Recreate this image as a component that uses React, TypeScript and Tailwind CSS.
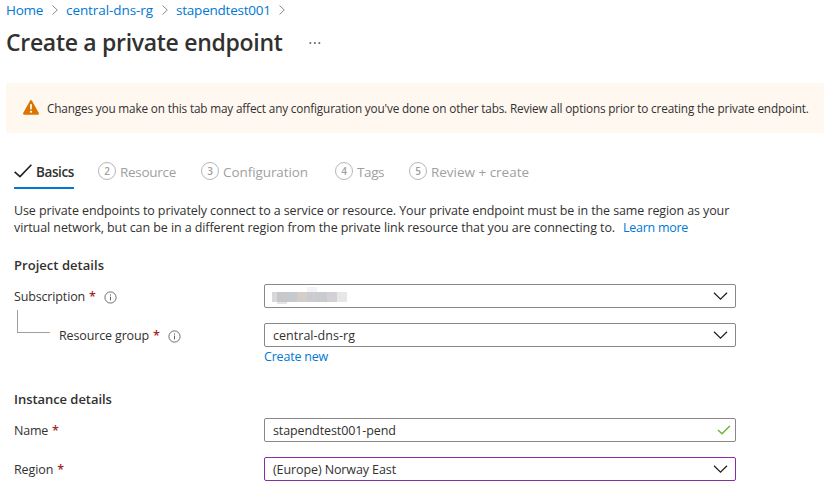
import type { ReactNode } from "react";

function CrumbChevron() {
  return (
    <svg width="6" height="10" viewBox="0 0 6 10" fill="none" stroke="#8a8886" strokeWidth="1">
      <path d="M0.5 0.5 5.3 5 0.5 9.5" />
    </svg>
  );
}

function ChevronDown() {
  return (
    <svg width="15" height="8" viewBox="0 0 15 8" fill="none" stroke="#201f1e" strokeWidth="1.25">
      <path d="M1 0.8 7.5 7.1 14 0.8" />
    </svg>
  );
}

function InfoIcon() {
  return (
    <svg width="13" height="13" viewBox="0 0 13 13" fill="none" stroke="#605e5c">
      <circle cx="6.5" cy="6.5" r="5.6" strokeWidth="0.9" />
      <path d="M6.5 5.6V9.4M6.5 3.5V4.6" strokeWidth="1" />
    </svg>
  );
}

function Required() {
  return <span className="ml-1 font-semibold text-[#a4262c]">*</span>;
}

function Step({ n, label, className }: { n: number; label: string; className: string }) {
  return (
    <div className="flex h-[22px] items-center gap-1 text-[13.5px] text-[#a19f9d]">
      <span className="mb-0.5 flex h-[18px] w-[18px] items-center justify-center rounded-full border border-[#b8b6b4] text-[10px] leading-none font-semibold">
        {n}
      </span>
      <span className={className}>{label}</span>
    </div>
  );
}

function Field({ children, icon, active = false }: { children: ReactNode; icon: ReactNode; active?: boolean }) {
  return (
    <div
      className={`flex h-6 w-[472px] items-center justify-between rounded-[2px] border pl-2 ${
        active ? "border-[#8a2da5]" : "border-[#8a8886]"
      }`}
    >
      <div className="pt-0.5">{children}</div>
      {icon}
    </div>
  );
}

const chevron = (
  <span className="mr-[7px]">
    <ChevronDown />
  </span>
);

export default function App() {
  return (
    <div className="h-[496px] w-[824px] overflow-hidden bg-white font-['Open_Sans','Noto_Sans',sans-serif] text-[12.5px] tracking-[-0.1px] whitespace-nowrap text-[#323130]">
      <nav className="flex h-5 items-center pl-1.5 text-[13.5px] text-[#0078d4]">
        <span className="w-[46px] tracking-[-0.25px]">Home</span>
        <CrumbChevron />
        <span className="ml-2 w-24 tracking-[-0.08px]">central-dns-rg</span>
        <CrumbChevron />
        <span className="ml-2 w-[103px] tracking-[-0.22px]">stapendtest001</span>
        <CrumbChevron />
      </nav>

      <header className="mt-1.5 flex h-8 items-center pl-1.5">
        <h1 className="w-[303px] text-[23px] leading-8 font-semibold tracking-[-0.3px]">Create a private endpoint</h1>
        <svg className="mt-0.5" width="12" height="2" viewBox="0 0 12 2" fill="#605e5c">
          <rect x="0.5" y="0.2" width="1.7" height="1.7" />
          <rect x="5" y="0.2" width="1.7" height="1.7" />
          <rect x="9.5" y="0.2" width="1.7" height="1.7" />
        </svg>
      </header>

      <div className="mt-[25px] ml-1.5 flex h-[50px] items-center rounded-l-[2px] bg-[#fff8f1] pl-[17px]">
        <svg className="mr-2 mb-0.5" width="16" height="15" viewBox="0 0 16 15">
          <path
            d="M7 0.7Q8 -0.5 9 0.7L15.8 13Q16.2 14.7 14.8 14.8H1.2Q-0.2 14.7 0.2 13Z"
            fill="#db7500"
          />
          <path d="M7 4.3H9L8.7 9.6H7.3Z" fill="white" />
          <circle cx="8" cy="11.8" r="1.1" fill="white" />
        </svg>
        <span className="pt-0.5 text-[11.75px] tracking-[-0.155px]">
          Changes you make on this tab may affect any configuration you've done on other tabs. Review all options prior
          to creating the private endpoint.
        </span>
      </div>

      <main className="pl-3.5">
        <div className="mt-7 flex h-7">
          <div className="flex h-7 w-[60px] items-start border-b-2 border-[#0078d4]">
            <div className="flex h-[22px] items-center text-[13.5px] font-semibold">
              <svg className="mr-1 mb-0.5" width="18" height="14" viewBox="0 0 18 14" fill="none" stroke="#201f1e" strokeWidth="1.6">
                <path d="M0.6 7.8 6 12.6 17.4 0.8" />
              </svg>
              <span className="tracking-[-0.4px]">Basics</span>
            </div>
          </div>
          <div className="ml-6 w-[103px]">
            <Step n={2} label="Resource" className="tracking-[-0.28px]" />
          </div>
          <div className="w-[134px]">
            <Step n={3} label="Configuration" className="tracking-[-0.08px]" />
          </div>
          <div className="w-[74px]">
            <Step n={4} label="Tags" className="tracking-[-0.4px]" />
          </div>
          <Step n={5} label="Review + create" className="tracking-[-0.02px]" />
        </div>

        <p className="mt-[13px] leading-[17px]">
          Use private endpoints to privately connect to a service or resource. Your private endpoint must be in the same
          region as your
          <br />
          <span className="tracking-[-0.085px]">
            virtual network, but can be in a different region from the private link resource that you are connecting to.
          </span>
          <a className="ml-2 tracking-[-0.27px] text-[#0078d4]">Learn more</a>
        </p>

        <h2 className="mt-5 h-[18px] text-[13px] leading-[18px] font-semibold tracking-[0.04px]">Project details</h2>
        <div className="mt-2.5 flex h-6 items-center">
          <div className="flex w-[250px] items-center pt-0.5">
            <span className="tracking-[-0.15px]">Subscription</span>
            <Required />
            <span className="mt-px ml-2">
              <InfoIcon />
            </span>
          </div>
          <Field icon={chevron}>
            <div className="-ml-px grid h-[14px] grid-cols-[5px_10px_10px_10px_10px_10px_10px_10px] grid-rows-[2px_10px_2px]">
              <i className="col-span-4" />
              <i className="mt-[-3px] h-[5px] bg-[#f4f4f5]" />
              <i className="col-span-3" />
              <i className="bg-[#d8d7da]" />
              <i className="bg-[#c9c7cc]" />
              <i className="bg-[#c5cacc]" />
              <i className="bg-[#d3cec8]" />
              <i className="bg-[#cccbd1]" />
              <i className="bg-[#c8cccd]" />
              <i className="bg-[#d3d0d6]" />
              <i className="bg-[#e6e8e8]" />
              <i />
              <i className="bg-[#e4e4e6]" />
            </div>
          </Field>
        </div>
        <div className="mt-[15px] flex h-6 items-center">
          <div className="flex w-[250px] items-center pt-0.5">
            <span className="mr-[9px] mb-[29px] ml-[3px] h-[23px] w-[33px] border-b border-l border-[#a19f9d]" />
            <span className="tracking-[-0.14px]">Resource group</span>
            <Required />
            <span className="mt-px ml-2">
              <InfoIcon />
            </span>
          </div>
          <Field icon={chevron}>
            <span className="tracking-[0.03px]">central-dns-rg</span>
          </Field>
        </div>
        <div className="mt-px h-[18px] pl-[250px] leading-[18px]">
          <a className="tracking-[-0.2px] text-[#0078d4]">Create new</a>
        </div>

        <h2 className="mt-6 h-[18px] text-[13px] leading-[18px] font-semibold tracking-[-0.05px]">Instance details</h2>
        <div className="mt-2.5 flex h-6 items-center">
          <div className="w-[250px] pt-0.5">
            <span className="tracking-[-0.22px]">Name</span>
            <Required />
          </div>
          <Field
            icon={
              <svg className="mr-1" width="14" height="10" viewBox="0 0 14 10" fill="none" stroke="#6bb536" strokeWidth="1.4">
                <path d="M1 5 5 8.8 12.8 0.9" />
              </svg>
            }
          >
            stapendtest001-pend
          </Field>
        </div>
        <div className="mt-[15px] flex h-6 items-center">
          <div className="w-[250px] pt-0.5">
            <span className="tracking-[-0.1px]">Region</span>
            <Required />
          </div>
          <Field icon={chevron} active>
            (Europe) Norway East
          </Field>
        </div>
      </main>
    </div>
  );
}
